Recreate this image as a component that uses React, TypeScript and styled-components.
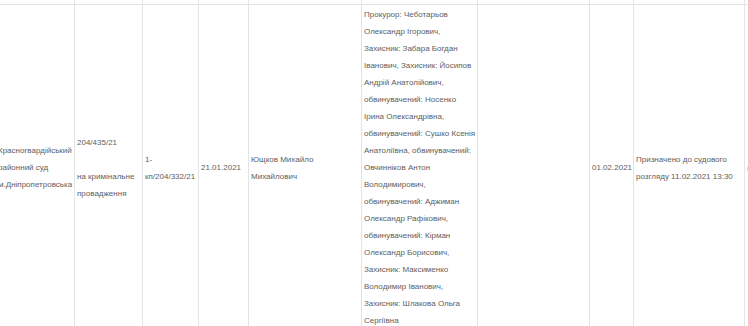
import React from 'react';
import styled, { createGlobalStyle } from 'styled-components';

const GlobalStyle = createGlobalStyle`
  html, body {
    margin: 0;
    padding: 0;
    background: #fff;
    overflow: hidden;
  }
  body {
    width: 748px;
    height: 326px;
  }
`;

const Page = styled.div`
  width: 748px;
  height: 326px;
  overflow: hidden;
`;

const Table = styled.table<{ $w: number }>`
  border-collapse: collapse;
  table-layout: fixed;
  width: ${(p) => p.$w}px;
  margin-left: -5px;
  margin-top: -12px;
  font-family: 'Liberation Sans', Arial, sans-serif;
  font-size: 8px;
  line-height: 17px;
  color: #606060;
`;

const Cell = styled.td<{ $h?: number }>`
  border: 1px solid #e4e4e4;
  padding: 1px 2px 2px 2px;
  vertical-align: middle;
  text-align: left;
  white-space: nowrap;
  overflow: hidden;
  ${(p) => (p.$h ? `height: ${p.$h}px;` : '')}
`;

const Link = styled.span`
  color: #3a7bc8;
`;

const widths = [79, 68, 56, 50, 113, 116, 112, 44, 111, 60];
const total = widths.reduce((a, b) => a + b, 0);

const parties = [
  'Прокурор: Чеботарьов',
  'Олександр Ігорович,',
  'Захисник: Забара Богдан',
  'Іванович, Захисник: Йосипов',
  'Андрій Анатолійович,',
  'обвинувачений: Носенко',
  'Ірина Олександрівна,',
  'обвинувачений: Сушко Ксенія',
  'Анатоліївна, обвинувачений:',
  'Овчинніков Антон',
  'Володимирович,',
  'обвинувачений: Аджиман',
  'Олександр Рафікович,',
  'обвинувачений: Кірман',
  'Олександр Борисович,',
  'Захисник: Максименко',
  'Володимир Іванович,',
  'Захисник: Шлакова Ольга',
  'Сергіївна',
];

const Lines = ({ items }: { items: string[] }) => (
  <>
    {items.map((t, i) => (
      <React.Fragment key={i}>
        {i > 0 && <br />}
        {t}
      </React.Fragment>
    ))}
  </>
);

const App = () => {
  return (
    <Page>
      <GlobalStyle />
      <Table $w={total}>
        <colgroup>
          {widths.map((w, i) => (
            <col key={i} style={{ width: w }} />
          ))}
        </colgroup>
        <tbody>
          <tr>
            {widths.map((_, i) => (
              <Cell key={i} $h={12} />
            ))}
          </tr>
          <tr>
            <Cell>
              <Lines items={['Красногвардійський', 'районний суд', 'м.Дніпропетровська']} />
            </Cell>
            <Cell>
              <Lines items={['204/435/21', '\u00a0', 'на кримінальне', 'провадження']} />
            </Cell>
            <Cell>
              <Lines items={['1-', 'кп/204/332/21']} />
            </Cell>
            <Cell>21.01.2021</Cell>
            <Cell>
              <Lines items={['Ющков Михайло', 'Михайлович']} />
            </Cell>
            <Cell>
              <Lines items={parties} />
            </Cell>
            <Cell />
            <Cell>01.02.2021</Cell>
            <Cell>
              <Lines items={['Призначено до судового', 'розгляду 11.02.2021 13:30']} />
            </Cell>
            <Cell>
              <Link>(</Link>
            </Cell>
          </tr>
        </tbody>
      </Table>
    </Page>
  );
};

export default App;
